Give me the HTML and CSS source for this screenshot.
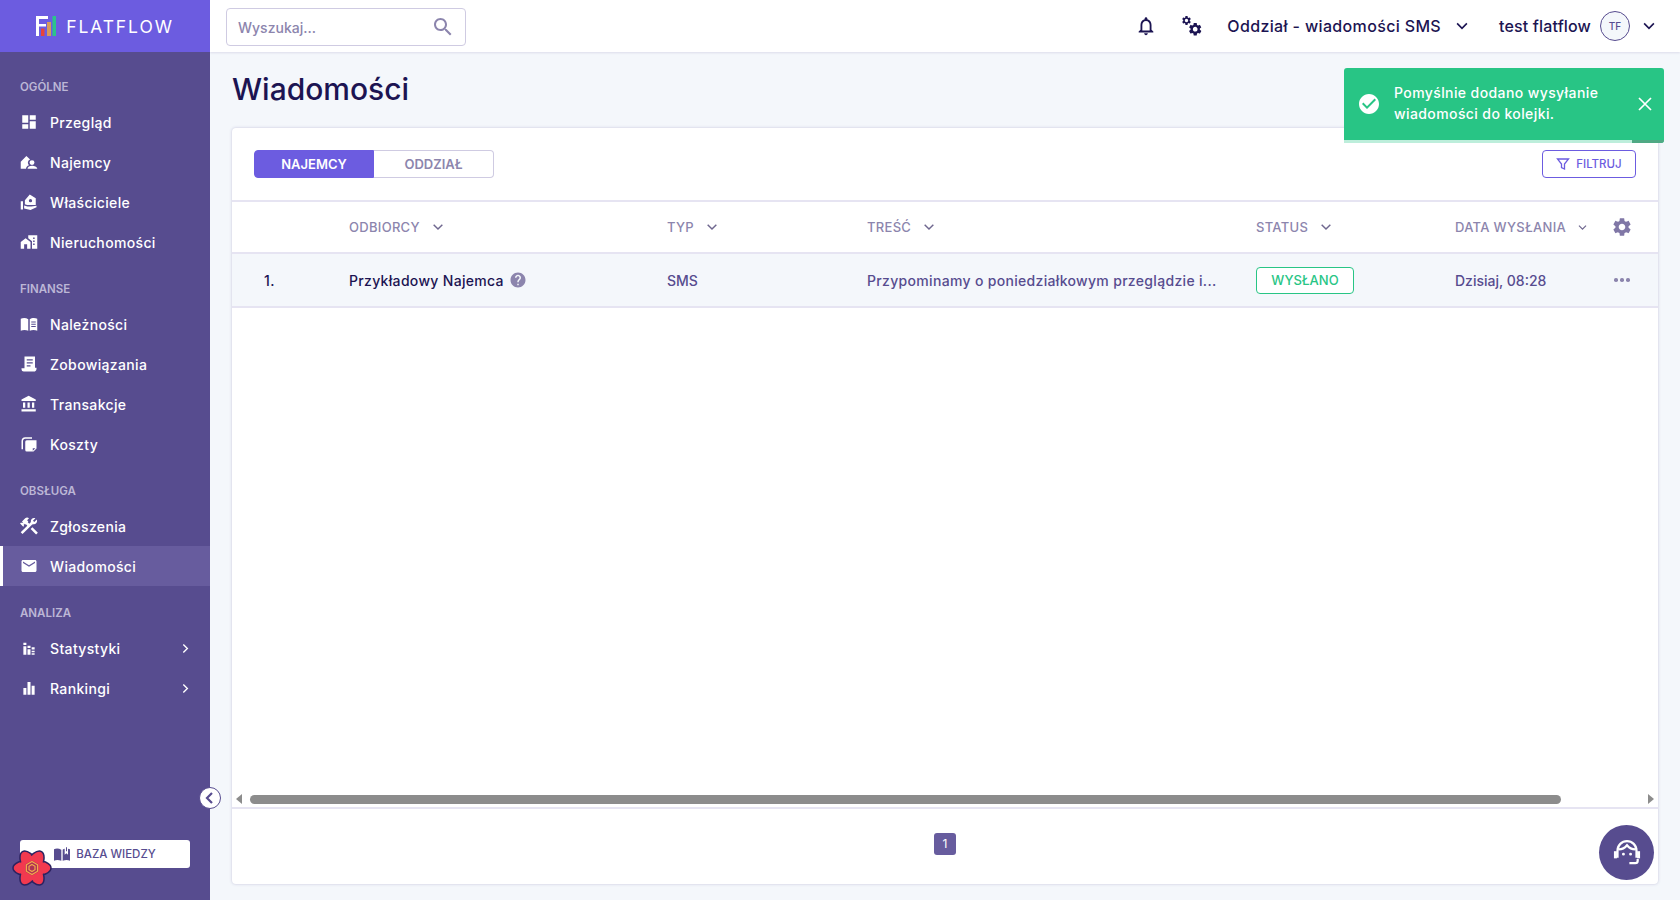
FILE: index.html
```html
<!DOCTYPE html>
<html lang="pl">
<head>
    <meta charset="UTF-8">
    <title>Wiadomości - Flatflow</title>
    <link rel="stylesheet" href="styles.css">
</head>
<body>
    <svg class="sprite" xmlns="http://www.w3.org/2000/svg">
        <symbol id="i-dashboard" viewBox="0 0 24 24"><path d="M3 13h8V3H3v10zm0 8h8v-6H3v6zm10 0h8V11h-8v10zm0-18v6h8V3h-8z"/></symbol>
        <symbol id="i-tenant" viewBox="0 0 24 24"><path d="M1 21V11.500L8.500 4l5 4.500c-2 .8-3 2.500-3 4.500 0 1.300.5 2.500 1.500 3.200C9.500 17 8 19 8 21zM16 9.500a3.300 3.300 0 1 1 0 6.600 3.300 3.300 0 0 1 0-6.600zM10 21c0-2.700 3-4 6-4s7 1.300 7 4z"/></symbol>
        <symbol id="i-owner" viewBox="0 0 24 24"><path d="M13 2l8 5v9H9.500l-3-1V9.500zM14 8a2.200 2.200 0 1 0 0 4.400A2.200 2.200 0 0 0 14 8zM1 11h3v11H1zM5.500 16.500l4.500 1.500h5l7-1v2l-8 3.500-8.500-2z"/></symbol>
        <symbol id="i-building" viewBox="0 0 24 24"><path d="M1 21v-9l6.500-5 6.500 5v9h-4.500v-6h-4v6zM11 3h12v18h-7V11l-5-4zM17.500 6v2h2V6zM17.500 10v2h2v-2zM17.500 14v2h2v-2z"/></symbol>
        <symbol id="i-book" viewBox="0 0 24 24"><path d="M1 5c3-1.500 7-1.500 10 .5V21c-3-1.500-7-1.500-10 0zM13 5.500c2.500-1.700 7-2 10-.5v16c-3-1.500-7-1.500-10 0zM15 8.500v1.400h6V8.500zM15 11.500v1.400h6v-1.400zM15 14.500v1.400h6v-1.400z"/></symbol>
        <symbol id="i-invoice" viewBox="0 0 24 24"><path d="M6 2h14v15h2v1.500c0 1.900-1.500 3.500-3.500 3.500H5a3 3 0 0 1-3-3v-1.500h4zM9 5.500v1.700h8V5.500zM9 9.500v1.700h8V9.500zM9 13.500v1.700h5v-1.700z"/></symbol>
        <symbol id="i-bank" viewBox="0 0 24 24"><path d="M4 10v7h3v-7H4zm6 0v7h3v-7h-3zM2 22h19v-3H2v3zm14-12v7h3v-7h-3zm-4.500-9L2 6v2h19V6l-9.500-5z"/></symbol>
        <symbol id="i-costs" viewBox="0 0 24 24"><path d="M9 7h13v11l-4 4H9a2 2 0 0 1-2-2V9a2 2 0 0 1 2-2zM17 17.500V21l3.500-3.500zM2 8c0-3 2-5 5-5h9v2H7C5 5 4 6.500 4 8v11H2z"/></symbol>
        <symbol id="i-tools" viewBox="2 2 20 20"><path d="M13.780 15.300l6.100 6.100 2-2-6.100-6.100zM17.500 10c1.900 0 3.500-1.600 3.500-3.500 0-.6-.2-1.100-.4-1.600l-2.700 2.700-1.500-1.500 2.700-2.700c-.5-.2-1-.4-1.600-.4C15.600 3 14 4.600 14 6.500c0 .4.100.8.200 1.100l-1.900 1.800-1.700-1.700.7-.7-1.400-1.400 2.100-2.100c-1.200-1.200-3-1.200-4.200 0L4.200 7.100l1.400 1.400H2.800l-.7.7 3.500 3.500.7-.7V9.200l1.400 1.400.7-.7 1.700 1.700-7.300 7.300 2 2L15.600 10.200c.6-.1 1.200-.2 1.900-.2z"/></symbol>
        <symbol id="i-mail" viewBox="0 0 24 24"><path d="M20 4H4c-1.100 0-1.990.9-1.990 2L2 18c0 1.100.9 2 2 2h16c1.100 0 2-.9 2-2V6c0-1.100-.9-2-2-2zm0 4l-8 5-8-5V6l8 5 8-5v2z"/></symbol>
        <symbol id="i-stats" viewBox="0 0 24 24"><path d="M4.500 5h4v3h-4zM4.500 9.500h4V21h-4zM10 9h4v3h-4zM10 13.500h4V21h-4zM15.500 11h4v3h-4zM15.500 15.500h4v2h-4zM15.500 19h4v2h-4z"/></symbol>
        <symbol id="i-bars" viewBox="0 0 24 24"><path d="M4.500 12h4v9h-4zM10 4h4v17h-4zM15.500 9h4v12h-4z"/></symbol>
        <symbol id="i-chev" viewBox="0 0 24 24"><path d="M5.500 8.500L12 15l6.500-6.500" fill="none" stroke="currentColor" stroke-width="2.200"/></symbol>
        <symbol id="i-gear" viewBox="0 0 24 24"><path d="M19.140 12.940c.04-.3.06-.61.06-.94 0-.32-.02-.64-.07-.94l2.030-1.580c.18-.14.23-.41.12-.61l-1.920-3.320c-.12-.22-.37-.29-.59-.22l-2.390.96c-.5-.38-1.030-.7-1.620-.94l-.36-2.540c-.04-.24-.24-.41-.48-.41h-3.840c-.24 0-.43.17-.47.41l-.36 2.540c-.59.24-1.130.57-1.620.94l-2.390-.96c-.22-.08-.47 0-.59.22L2.740 8.870c-.12.21-.08.47.12.61l2.030 1.580c-.05.3-.09.63-.09.94s.02.64.07.94l-2.030 1.580c-.18.14-.23.41-.12.61l1.920 3.320c.12.22.37.29.59.22l2.390-.96c.5.38 1.030.7 1.620.94l.36 2.540c.05.24.24.41.48.41h3.840c.24 0 .44-.17.47-.41l.36-2.540c.59-.24 1.130-.56 1.620-.94l2.390.96c.22.08.47 0 .59-.22l1.920-3.320c.12-.22.07-.47-.12-.61l-2.010-1.580zM12 15.600c-1.980 0-3.600-1.620-3.600-3.600s1.620-3.600 3.600-3.600 3.600 1.620 3.600 3.600-1.620 3.600-3.600 3.600z"/></symbol>
    </svg>

    <div class="app">
        <aside class="sidebar">
            <div class="logo">
                <svg class="logo-mark" width="20" height="20" viewBox="0 0 20 20">
                    <path fill="#fff" d="M0 0h12v3H3v5h7v2.500H3V20H0z"/>
                    <rect x="5" y="12.500" width="3.500" height="7.500" fill="#e8443a"/>
                    <rect x="11" y="6" width="4" height="14" fill="#d79a5b"/>
                    <rect x="16.500" y="0" width="3.500" height="20" fill="#2bc48a"/>
                </svg>
                <span class="logo-text">FLATFLOW</span>
            </div>
            <nav class="nav">
                <div class="nav-title">OGÓLNE</div>
                <a class="nav-item"><svg><use href="#i-dashboard"/></svg>Przegląd</a>
                <a class="nav-item"><svg><use href="#i-tenant"/></svg>Najemcy</a>
                <a class="nav-item"><svg><use href="#i-owner"/></svg>Właściciele</a>
                <a class="nav-item"><svg><use href="#i-building"/></svg>Nieruchomości</a>
                <div class="nav-title">FINANSE</div>
                <a class="nav-item"><svg><use href="#i-book"/></svg>Należności</a>
                <a class="nav-item"><svg><use href="#i-invoice"/></svg>Zobowiązania</a>
                <a class="nav-item"><svg><use href="#i-bank"/></svg>Transakcje</a>
                <a class="nav-item"><svg><use href="#i-costs"/></svg>Koszty</a>
                <div class="nav-title">OBSŁUGA</div>
                <a class="nav-item"><svg><use href="#i-tools"/></svg>Zgłoszenia</a>
                <a class="nav-item active"><svg><use href="#i-mail"/></svg>Wiadomości</a>
                <div class="nav-title">ANALIZA</div>
                <a class="nav-item"><svg><use href="#i-stats"/></svg>Statystyki<svg class="nav-arrow"><use href="#i-chev"/></svg></a>
                <a class="nav-item"><svg><use href="#i-bars"/></svg>Rankingi<svg class="nav-arrow"><use href="#i-chev"/></svg></a>
            </nav>
            <button class="collapse-btn">
                <svg width="14" height="14" viewBox="0 0 14 14"><path d="M9 2L4 7l5 5" fill="none" stroke="#574c8f" stroke-width="2.200"/></svg>
            </button>
            <div class="kb-wrap">
                <button class="kb-btn">
                    <svg width="16" height="14" viewBox="0 0 24 20"><path fill="#574c8f" d="M0 3c3-1.500 7-1.500 11 .5V20c-4-1.500-8-1.500-11 0zM13 3.500c1-.6 2-1 3-1.200V11l2.500-2L21 11V2.200c1 .1 2 .4 3 .8v17c-3-1.500-7-1.500-11 0zM18 0h1.500v6H18z"/></svg>
                    BAZA WIEDZY
                </button>
            </div>
            <svg class="devtools" width="40" height="38" viewBox="0 0 40 38">
                <g fill="#f2394f" stroke="#2b2260" stroke-width="1.500">
                    <ellipse cx="20" cy="19" rx="19" ry="8.500"/>
                    <ellipse cx="20" cy="19" rx="19" ry="8.500" transform="rotate(60 20 19)"/>
                    <ellipse cx="20" cy="19" rx="19" ry="8.500" transform="rotate(120 20 19)"/>
                </g>
                <ellipse cx="20" cy="19" rx="17" ry="7.500" fill="#f2394f"/>
                <ellipse cx="20" cy="19" rx="17" ry="7.500" fill="#f2394f" transform="rotate(60 20 19)"/>
                <ellipse cx="20" cy="19" rx="17" ry="7.500" fill="#f2394f" transform="rotate(120 20 19)"/>
                <polygon points="20,11.500 26.500,15.250 26.500,22.750 20,26.500 13.500,22.750 13.500,15.250" fill="#2b2260" opacity=".35"/>
                <polygon points="20,12.500 25.600,15.750 25.600,22.250 20,25.500 14.400,22.250 14.400,15.750" fill="none" stroke="#f4a94a" stroke-width="1.300"/>
                <polygon points="20,15.500 23,17.250 23,20.750 20,22.500 17,20.750 17,17.250" fill="none" stroke="#f4a94a" stroke-width="1.200"/>
            </svg>
        </aside>

        <div class="main">
            <header class="topbar">
                <div class="search">
                    <span class="search-text">Wyszukaj...</span>
                    <svg width="24" height="24" viewBox="0 0 24 24" fill="#8c85ad"><path d="M15.500 14h-.79l-.28-.27C15.410 12.590 16 11.110 16 9.500 16 5.910 13.090 3 9.500 3S3 5.910 3 9.500 5.910 16 9.500 16c1.610 0 3.090-.59 4.230-1.570l.27.28v.79l5 4.990L20.490 19l-4.990-5zm-6 0C7.010 14 5 11.990 5 9.500S7.010 5 9.500 5 14 7.010 14 9.500 11.990 14 9.500 14z"/></svg>
                </div>
                <div class="topbar-right">
                    <svg class="bell" width="22" height="22" viewBox="0 0 24 24" fill="#1c1452"><path d="M12 22c1.100 0 2-.9 2-2h-4c0 1.100.9 2 2 2zm6-6v-5c0-3.070-1.630-5.640-4.500-6.320V4c0-.83-.67-1.500-1.500-1.500s-1.500.67-1.500 1.500v.68C7.640 5.360 6 7.920 6 11v5l-2 2v1h16v-1l-2-2zm-2 1H8v-6c0-2.480 1.510-4.500 4-4.500s4 2.020 4 4.500v6z"/></svg>
                    <svg class="gears" width="22" height="22" viewBox="0 0 24 24" fill="#1c1452">
                        <use href="#i-gear" x="7" y="7" width="17" height="17"/>
                        <use href="#i-gear" x="0" y="0" width="12" height="12"/>
                    </svg>
                    <span class="top-label">Oddział - wiadomości SMS</span>
                    <svg class="top-chev"><use href="#i-chev"/></svg>
                    <span class="top-label user">test flatflow</span>
                    <span class="avatar">TF</span>
                    <svg class="top-chev"><use href="#i-chev"/></svg>
                </div>
            </header>

            <div class="content">
                <h1 class="page-title">Wiadomości</h1>
                <section class="card">
                    <div class="card-head">
                        <div class="tabs">
                            <span class="tab selected">NAJEMCY</span>
                            <span class="tab">ODDZIAŁ</span>
                        </div>
                        <button class="filter-btn">
                            <svg width="14" height="14" viewBox="0 0 14 14"><path d="M1.500 2h11L8.500 7v5l-3-1.500V7z" fill="none" stroke="#6c5ce0" stroke-width="1.300"/></svg>
                            FILTRUJ
                        </button>
                    </div>

                    <div class="table">
                        <div class="t-row t-head">
                            <div class="cell"></div>
                            <div class="cell">ODBIORCY<svg class="sort"><use href="#i-chev"/></svg></div>
                            <div class="cell">TYP<svg class="sort"><use href="#i-chev"/></svg></div>
                            <div class="cell">TREŚĆ<svg class="sort"><use href="#i-chev"/></svg></div>
                            <div class="cell">STATUS<svg class="sort"><use href="#i-chev"/></svg></div>
                            <div class="cell">DATA WYSŁANIA<svg class="sort small"><use href="#i-chev"/></svg></div>
                            <div class="cell"><svg class="col-gear"><use href="#i-gear"/></svg></div>
                        </div>
                        <div class="t-row t-body">
                            <div class="cell idx">1.</div>
                            <div class="cell name">Przykładowy Najemca
                                <svg class="help" viewBox="0 0 24 24" fill="#8c85ad"><path d="M12 2C6.480 2 2 6.480 2 12s4.480 10 10 10 10-4.480 10-10S17.520 2 12 2zm1 17h-2v-2h2v2zm2.070-7.750l-.9.920C13.450 12.900 13 13.500 13 15h-2v-.5c0-1.100.45-2.100 1.170-2.830l1.240-1.260c.37-.36.59-.86.59-1.410 0-1.100-.9-2-2-2s-2 .9-2 2H8c0-2.210 1.790-4 4-4s4 1.790 4 4c0 .88-.36 1.680-.93 2.250z"/></svg>
                            </div>
                            <div class="cell tight">SMS</div>
                            <div class="cell"><span class="clip">Przypominamy o poniedziałkowym przeglądzie i...</span></div>
                            <div class="cell"><span class="badge">WYSŁANO</span></div>
                            <div class="cell tight">Dzisiaj, 08:28</div>
                            <div class="cell dots"><i></i><i></i><i></i></div>
                        </div>
                    </div>

                    <div class="scrollbar">
                        <span class="arrow left"></span>
                        <div class="track"><div class="thumb"></div></div>
                        <span class="arrow right"></span>
                    </div>
                    <div class="pager"><span class="page">1</span></div>
                </section>
            </div>
        </div>
    </div>

    <div class="toast">
        <svg width="24" height="24" viewBox="0 0 24 24" fill="#fff"><path d="M12 2C6.480 2 2 6.480 2 12s4.480 10 10 10 10-4.480 10-10S17.520 2 12 2zm-2 15l-5-5 1.410-1.410L10 14.170l7.590-7.590L19 8l-9 9z"/></svg>
        <span class="toast-text">Pomyślnie dodano wysyłanie wiadomości do kolejki.</span>
        <svg width="18" height="18" viewBox="0 0 18 18"><path d="M3 3l12 12M15 3L3 15" stroke="#fff" stroke-width="1.700"/></svg>
        <div class="toast-track"><div class="toast-bar"></div></div>
    </div>

    <button class="help-fab">
        <svg width="38" height="38" viewBox="0 0 32 32" fill="none" stroke="#fff" stroke-width="1.900">
            <path d="M8 20v-6a8 8 0 0 1 16 0v6"/>
            <path d="M9 13c3 0 5-1 7-3.500 2 2.500 4 3.500 7 3.500"/>
            <path d="M25 21v1.500a2 2 0 0 1-2 2h-5"/>
            <rect x="5.500" y="15" width="1.500" height="5" fill="#fff" stroke-width="1"/>
            <rect x="25" y="15" width="1.500" height="5" fill="#fff" stroke-width="1"/>
            <circle cx="13" cy="17" r=".7" fill="#fff" stroke-width="1"/>
            <circle cx="19" cy="17" r=".7" fill="#fff" stroke-width="1"/>
        </svg>
    </button>
</body>
</html>
```

FILE: styles.css
```css
* {
    box-sizing: border-box;
}

body {
    margin: 0;
    height: 900px;
    overflow: hidden;
    font-family: Inter, "Noto Sans", sans-serif;
    font-size: 14px;
    color: #574c8f;
    background-color: #f4f7fb;
}

.sprite {
    display: none;
}

.app {
    display: flex;
    height: 900px;
}

/* Sidebar */
.sidebar {
    position: relative;
    width: 210px;
    flex-shrink: 0;
    display: flex;
    flex-direction: column;
    background-color: #574c8f;
}

.logo {
    height: 52px;
    display: flex;
    align-items: center;
    justify-content: center;
    gap: 10px;
    background-color: #6c5ce0;
}

.logo-text {
    color: #fff;
    font-size: 17.500px;
    letter-spacing: 1.9px;
}

.nav {
    display: flex;
    flex-direction: column;
    padding-top: 8px;
}

.nav-title {
    height: 42px;
    padding: 20px 0 0 20px;
    font-size: 11.500px;
    font-weight: 600;
    color: #bcb7d6;
}

.nav-item {
    height: 40px;
    display: flex;
    align-items: center;
    padding-left: 20px;
    color: #fff;
    font-weight: 500;
    font-size: 14px;
    letter-spacing: .35px;
}

.nav-item svg {
    width: 18px;
    height: 18px;
    margin-right: 12px;
    fill: #fff;
}

.nav-item .nav-arrow {
    width: 15px;
    height: 15px;
    margin: 0 17px 0 auto;
    transform: rotate(-90deg);
    fill: none;
}

.nav-item.active {
    background-color: #675c9e;
    border-left: 3px solid #fff;
    padding-left: 17px;
}

.collapse-btn {
    position: absolute;
    right: -11px;
    top: 787px;
    width: 22px;
    height: 22px;
    padding: 0;
    display: flex;
    align-items: center;
    justify-content: center;
    border: 1px solid #574c8f;
    border-radius: 50%;
    background: #fff;
}

.kb-wrap {
    margin-top: auto;
    padding: 0 20px 32px;
}

.kb-btn {
    width: 100%;
    height: 28px;
    display: flex;
    align-items: center;
    justify-content: center;
    gap: 6px;
    border: none;
    border-radius: 3px;
    background: #fff;
    color: #574c8f;
    font-family: inherit;
    font-size: 11.500px;
    font-weight: 500;
}

.devtools {
    position: absolute;
    left: 12px;
    top: 849px;
}

/* Top bar */
.main {
    flex: 1;
    min-width: 0;
    display: flex;
    flex-direction: column;
}

.topbar {
    height: 52px;
    flex-shrink: 0;
    display: flex;
    align-items: center;
    justify-content: space-between;
    padding: 0 22px 0 16px;
    background: #fff;
    box-shadow: 0 1px 2px rgba(87, 76, 143, .15);
}

.search {
    width: 240px;
    height: 38px;
    margin-top: 2px;
    display: flex;
    align-items: center;
    justify-content: space-between;
    padding: 0 10px 0 11px;
    border: 1px solid #cfcbe2;
    border-radius: 4px;
}

.search-text {
    color: #8c85ad;
    font-weight: 500;
    font-size: 14px;
}

.topbar-right {
    display: flex;
    align-items: center;
    color: #1c1452;
}

.bell {
    margin-right: 24px;
}

.gears {
    margin-right: 24px;
}

.gears use {
    fill: #1c1452;
}

.top-label {
    font-size: 16px;
    font-weight: 500;
    letter-spacing: .35px;
}

.top-label.user {
    margin-left: 28px;
    letter-spacing: .15px;
}

.top-chev {
    width: 18px;
    height: 18px;
    margin-left: 12px;
    color: #1c1452;
}

.avatar {
    width: 30px;
    height: 30px;
    margin-left: 9px;
    margin-right: -2px;
    display: flex;
    align-items: center;
    justify-content: center;
    border: 1px solid #574c8f;
    border-radius: 50%;
    background: #f4f7fb;
    color: #574c8f;
    font-size: 10px;
    font-weight: 500;
}

/* Content */
.content {
    flex: 1;
    display: flex;
    flex-direction: column;
    padding: 0 22px 16px;
    min-height: 0;
}

.page-title {
    height: 76px;
    margin: 0;
    padding-top: 19px;
    font-size: 30px;
    font-weight: 500;
    color: #1c1452;
}

.card {
    flex: 1;
    display: flex;
    flex-direction: column;
    min-height: 0;
    background: #fff;
    border-radius: 4px;
    box-shadow: 0 0 3px rgba(87, 76, 143, .3);
}

.card-head {
    height: 72px;
    flex-shrink: 0;
    display: flex;
    align-items: center;
    justify-content: space-between;
    padding: 0 22px;
}

.tabs {
    display: flex;
}

.tab {
    width: 120px;
    height: 28px;
    display: flex;
    align-items: center;
    justify-content: center;
    border: 1px solid #cfcbe2;
    border-left: none;
    border-radius: 0 4px 4px 0;
    color: #8c85ad;
    font-size: 13px;
    font-weight: 600;
}

.tab.selected {
    border: 1px solid #6c5ce0;
    border-radius: 4px 0 0 4px;
    background: #6c5ce0;
    color: #fff;
}

.filter-btn {
    width: 94px;
    height: 28px;
    display: flex;
    align-items: center;
    justify-content: center;
    gap: 6px;
    border: 1px solid #6c5ce0;
    border-radius: 4px;
    background: #fff;
    color: #6c5ce0;
    font-family: inherit;
    font-size: 11.500px;
    font-weight: 500;
}

/* Table */
.table {
    flex: 1;
    min-height: 0;
}

.t-row {
    display: grid;
    grid-template-columns: 117px 318px 200px 389px 199px 156px 47px;
    align-items: center;
    border-bottom: 2px solid #e6e4f2;
}

.t-head {
    height: 54px;
    border-top: 2px solid #e6e4f2;
    color: #8c85ad;
    font-size: 13px;
    font-weight: 500;
    letter-spacing: .3px;
}

.t-body {
    height: 54px;
    background: #f4f7fb;
    font-size: 14px;
    font-weight: 500;
    letter-spacing: .32px;
}

.cell {
    display: flex;
    align-items: center;
    min-width: 0;
}

.cell.tight {
    letter-spacing: 0;
}

.sort {
    width: 16px;
    height: 16px;
    margin-left: 10px;
    color: #6f678f;
}

.sort.small {
    width: 13px;
    height: 13px;
}

.col-gear {
    width: 22px;
    height: 22px;
    fill: #8077a6;
}

.idx {
    padding-left: 32px;
    color: #1c1452;
}

.name {
    color: #1c1452;
}

.help {
    width: 18px;
    height: 18px;
    margin-left: 5px;
}

.clip {
    width: 350px;
    white-space: nowrap;
    overflow: hidden;
}

.badge {
    width: 98px;
    height: 27px;
    display: flex;
    align-items: center;
    justify-content: center;
    border: 1px solid #28c585;
    border-radius: 4px;
    background: #fff;
    color: #28c585;
    font-size: 13px;
    letter-spacing: 0;
}

.dots {
    gap: 2.500px;
    padding-left: 3px;
}

.dots i {
    width: 3.500px;
    height: 3.500px;
    border-radius: 50%;
    background: #8c85ad;
}

/* Scrollbar and pager */
.scrollbar {
    height: 20px;
    flex-shrink: 0;
    display: flex;
    align-items: center;
    padding: 4px 4px 0;
}

.arrow {
    width: 0;
    height: 0;
    border-top: 5px solid transparent;
    border-bottom: 5px solid transparent;
}

.arrow.left {
    border-right: 6px solid #8c8c8c;
}

.arrow.right {
    border-left: 6px solid #8c8c8c;
}

.track {
    flex: 1;
    padding: 0 8px;
}

.thumb {
    width: 1311px;
    height: 9px;
    border-radius: 5px;
    background: #8c8c8c;
}

.pager {
    height: 77px;
    flex-shrink: 0;
    display: flex;
    align-items: center;
    justify-content: center;
    padding-bottom: 6px;
    border-top: 2px solid #e6e4f2;
}

.page {
    width: 22px;
    height: 22px;
    display: flex;
    align-items: center;
    justify-content: center;
    border-radius: 3px;
    background: #675c9e;
    color: #fff;
    font-size: 12px;
}

/* Floating things */
.toast {
    position: absolute;
    left: 1344px;
    top: 68px;
    width: 320px;
    height: 75px;
    display: flex;
    align-items: center;
    gap: 13px;
    padding: 0 10px 4px 13px;
    border-radius: 3px;
    background: #28c585;
    color: #fff;
}

.toast-text {
    flex: 1;
    font-size: 14px;
    font-weight: 500;
    line-height: 20.500px;
    letter-spacing: .4px;
}

.toast-track {
    position: absolute;
    left: 0;
    right: 0;
    bottom: 0;
    height: 3px;
    border-radius: 0 0 3px 3px;
    background: #4fa984;
}

.toast-bar {
    width: 288px;
    height: 3px;
    background: #bdeedb;
}

.help-fab {
    position: absolute;
    left: 1599px;
    top: 825px;
    width: 55px;
    height: 55px;
    display: flex;
    align-items: center;
    justify-content: center;
    padding: 0;
    border: none;
    border-radius: 50%;
    background: #574c8f;
}
```
